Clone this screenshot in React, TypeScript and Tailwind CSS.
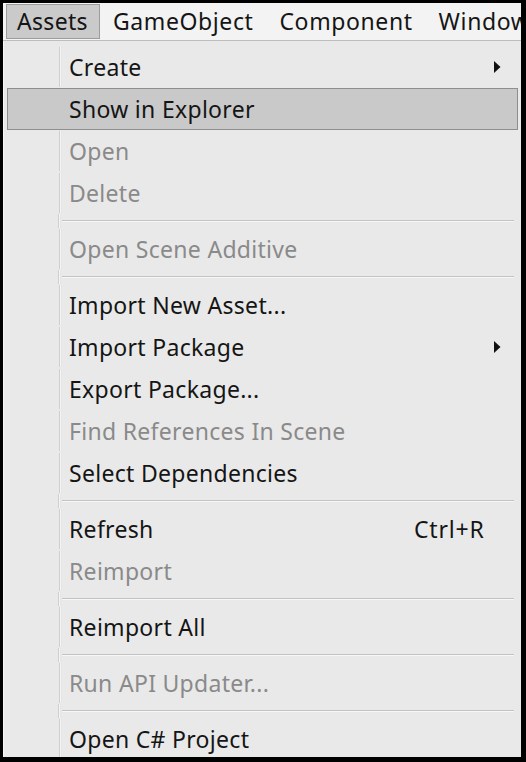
import React from "react";

type Entry =
  | { kind: "item"; label: string; disabled?: boolean; sub?: boolean; shortcut?: string; active?: boolean }
  | { kind: "sep" };

const ENTRIES: Entry[] = [
  { kind: "item", label: "Create", sub: true },
  { kind: "item", label: "Show in Explorer", active: true },
  { kind: "item", label: "Open", disabled: true },
  { kind: "item", label: "Delete", disabled: true },
  { kind: "sep" },
  { kind: "item", label: "Open Scene Additive", disabled: true },
  { kind: "sep" },
  { kind: "item", label: "Import New Asset..." },
  { kind: "item", label: "Import Package", sub: true },
  { kind: "item", label: "Export Package..." },
  { kind: "item", label: "Find References In Scene", disabled: true },
  { kind: "item", label: "Select Dependencies" },
  { kind: "sep" },
  { kind: "item", label: "Refresh", shortcut: "Ctrl+R" },
  { kind: "item", label: "Reimport", disabled: true },
  { kind: "sep" },
  { kind: "item", label: "Reimport All" },
  { kind: "sep" },
  { kind: "item", label: "Run API Updater...", disabled: true },
  { kind: "sep" },
  { kind: "item", label: "Open C# Project" },
];

const FONT = { fontFamily: '"Noto Sans", "Noto Sans CJK SC", sans-serif' };

function Arrow() {
  return (
    <svg width="8" height="13" viewBox="0 0 8 13" className="absolute right-[16px] top-1/2 -translate-y-1/2">
      <path d="M1 0.5 L7.5 6.5 L1 12.5 Z" fill="#111" />
    </svg>
  );
}

function Gutter() {
  return (
    <div className="absolute left-[51px] top-0 bottom-0 w-[3px] border-l border-[#cfcfcf] bg-[#f4f4f4] border-r border-r-[#e6e6e6]" />
  );
}

function MenuRow({ e }: { e: Extract<Entry, { kind: "item" }> }) {
  return (
    <div
      className={
        "relative flex items-center h-[42px] pl-[61px] text-[23px] tracking-[0.3px] mx-[3px] border " +
        (e.active ? "bg-[#c9c9c9] border-[#8e8e8e]" : "border-transparent") +
        (e.disabled ? " text-[#8a8a8a]" : " text-[#151515]")
      }
    >
      {!e.active && <Gutter />}
      <span>{e.label}</span>
      {e.shortcut && <span className="absolute left-[406px] tracking-[0.8px]">{e.shortcut}</span>}
      {e.sub && <Arrow />}
    </div>
  );
}

function Sep() {
  return (
    <div className="relative h-[14px] mx-[3px]">
      <Gutter />
      <div className="absolute left-[55px] right-[4px] top-[6px] h-[2px] border-t border-[#c2c2c2] bg-[#f7f7f7]" />
    </div>
  );
}

export default function App() {
  return (
    <div className="w-[526px] h-[762px] bg-black pl-[3px] pt-[3px] pr-[5px] pb-[5px] overflow-hidden" style={FONT}>
      <div className="h-full flex flex-col bg-[#e9e9e9] overflow-hidden">
        {/* menu bar */}
        <div className="h-[38px] shrink-0 flex items-stretch bg-[#f3f3f3] border-b border-[#bdbdbd] text-[23px] tracking-[0.3px] text-[#151515] whitespace-nowrap overflow-hidden">
          <div className="shrink-0 ml-[3px] my-[1px] pl-[10px] flex items-center bg-[#cacaca] border border-[#9c9c9c] w-[94px]">Assets</div>
          <div className="shrink-0 ml-[13px] flex items-center tracking-[0.6px]">GameObject</div>
          <div className="shrink-0 ml-[26px] flex items-center tracking-[0.6px]">Component</div>
          <div className="shrink-0 ml-[26px] flex items-center tracking-[0.6px]">Window</div>
        </div>
        {/* dropdown */}
        <div className="flex-1 flex flex-col pt-[5px] border-l border-[#f7f7f7]">
          {ENTRIES.map((e, i) => (e.kind === "sep" ? <Sep key={i} /> : <MenuRow key={i} e={e} />))}
        </div>
      </div>
    </div>
  );
}
